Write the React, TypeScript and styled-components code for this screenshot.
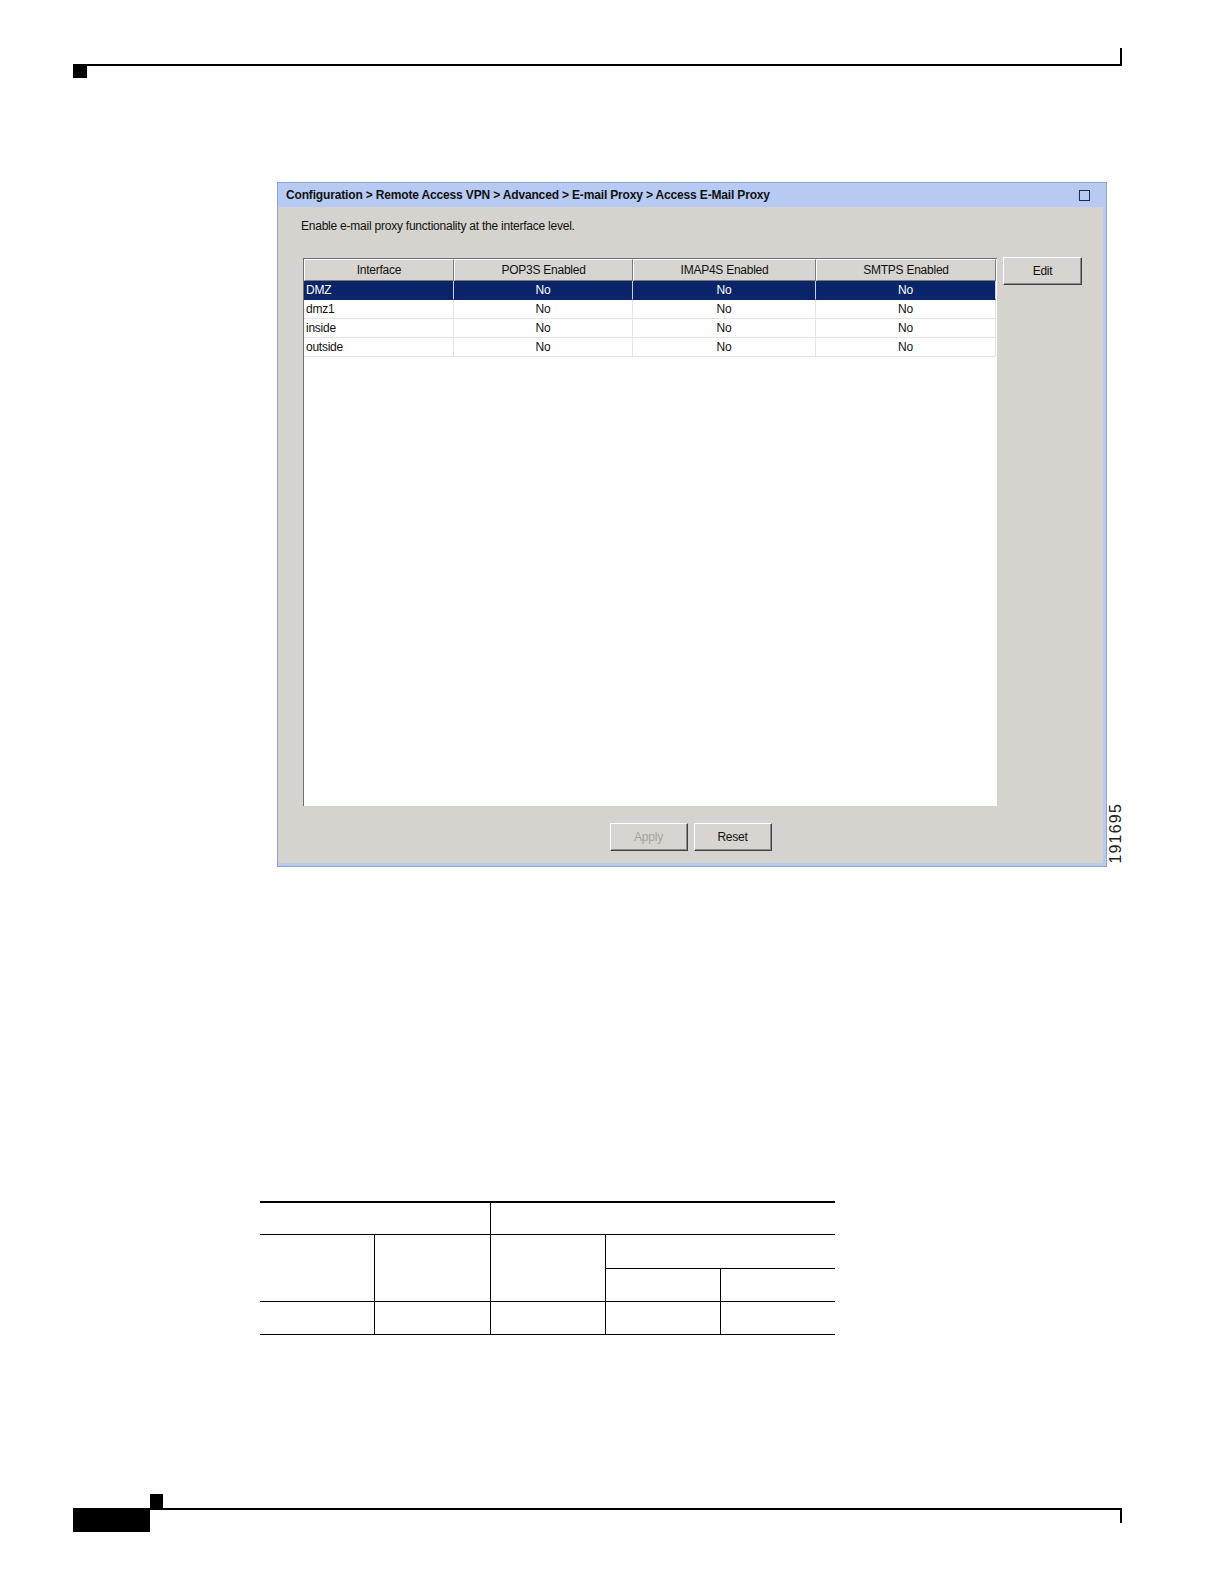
import React from "react";
import styled, { createGlobalStyle } from "styled-components";

const GlobalStyle = createGlobalStyle`
  html, body { margin: 0; padding: 0; background: #ffffff; }
  body { font-family: "Liberation Sans", Arial, sans-serif; }
  * { box-sizing: border-box; }
`;

const Page = styled.div`
  width: 1224px;
  height: 1584px;
  display: flex;
  flex-direction: column;
  overflow: hidden;
`;

const Header = styled.div`
  margin: 48px 0 0 73px;
  display: grid;
  grid-template-columns: 14px 1035px;
  grid-template-rows: 18px 12px;
`;

const HeaderRule = styled.div`
  grid-column: 1 / 3;
  grid-row: 1;
  border-bottom: 2px solid #000;
  border-right: 2px solid #000;
`;

const HeaderMarker = styled.div`
  grid-column: 1;
  grid-row: 2;
  background: #000;
`;

const FigureRow = styled.div`
  margin: 104px 0 0 277px;
  display: flex;
  align-items: flex-end;
`;

const Window = styled.div`
  width: 830px;
  height: 685px;
  border: 1px solid #8fa3cf;
  background: #d6d3ce;
  display: flex;
  flex-direction: column;
`;

const TitleBar = styled.div`
  height: 24px;
  flex: none;
  background: #b6caf4;
  display: flex;
  align-items: center;
  justify-content: space-between;
  padding: 0 16px 0 8px;
`;

const Title = styled.span`
  font-size: 12px;
  font-weight: bold;
  letter-spacing: -0.16px;
  color: #111;
`;

const MaxIcon = styled.span`
  width: 11px;
  height: 11px;
  border: 1.5px solid #1e2a50;
  margin-top: 1px;
`;

const Body = styled.div`
  flex: 1;
  display: flex;
  flex-direction: column;
  padding: 11px 0 0 23px;
  border-right: 3px solid #b9cbef;
  border-bottom: 3px solid #b9cbef;
`;

const Description = styled.div`
  font-size: 12px;
  line-height: 16px;
  letter-spacing: -0.23px;
  color: #111;
`;

const Content = styled.div`
  margin-top: 24px;
  display: flex;
  align-items: flex-start;
  padding-left: 2px;
`;

const TableBox = styled.div`
  width: 694px;
  height: 548px;
  background: #ffffff;
  border-left: 1px solid #6f6f6f;
  border-top: 1px solid #6f6f6f;
`;

const Grid = styled.table`
  width: 692px;
  table-layout: fixed;
  border-collapse: separate;
  border-spacing: 0;
  font-size: 12px;
  letter-spacing: -0.25px;
`;

const HeadCell = styled.th`
  height: 22px;
  padding: 0;
  font-weight: normal;
  color: #111;
  background: #d8d5d0;
  border-style: solid;
  border-width: 1px;
  border-color: #ffffff #7a7a7a #7a7a7a #ffffff;
  text-align: center;
  white-space: nowrap;
`;

const Cell = styled.td<{ $selected?: boolean; $first?: boolean }>`
  height: 19px;
  padding: 0 0 0 ${(p) => (p.$first ? "2px" : "0")};
  text-align: ${(p) => (p.$first ? "left" : "center")};
  color: ${(p) => (p.$selected ? "#ffffff" : "#111")};
  background: ${(p) => (p.$selected ? "#0a246a" : "#ffffff")};
  border-right: 1px solid ${(p) => (p.$selected ? "#c9cfe0" : "#e4e4e4")};
  border-bottom: 1px solid ${(p) => (p.$selected ? "#0a246a" : "#e4e4e4")};
  white-space: nowrap;
`;

const Button = styled.button<{ $disabled?: boolean }>`
  width: 78px;
  height: 28px;
  padding: 0;
  font-family: "Liberation Sans", Arial, sans-serif;
  font-size: 12px;
  letter-spacing: -0.25px;
  color: ${(p) => (p.$disabled ? "#a5a29d" : "#111")};
  background: #d8d5d0;
  border-style: solid;
  border-width: 1px;
  border-color: #ffffff #404040 #404040 #ffffff;
  box-shadow: inset -1px -1px 0 #8a8a8a;
  cursor: default;
`;

const SideButton = styled(Button)`
  width: 79px;
  margin: -1px 0 0 6px;
`;

const ButtonRow = styled.div`
  margin-top: 17px;
  margin-left: -23px;
  display: flex;
  justify-content: center;
  gap: 6px;
`;

const FigNum = styled.div`
  writing-mode: vertical-rl;
  transform: rotate(180deg);
  font-family: "Liberation Sans", Arial, sans-serif;
  font-size: 16px;
  letter-spacing: 1.2px;
  line-height: 16px;
  color: #222;
  margin: 0 0 3px 1px;
`;

const SpecTable = styled.table`
  margin: 334px 0 0 260px;
  width: 575px;
  border-collapse: collapse;
  table-layout: fixed;
`;

const SpecRow = styled.tr<{ $h: number; $thick?: boolean }>`
  height: ${(p) => p.$h}px;
  border-top: ${(p) => (p.$thick ? "2px" : "1px")} solid #000;
`;

const SpecCell = styled.td<{ $left?: boolean }>`
  padding: 0;
  border-bottom: 1px solid #000;
  border-left: ${(p) => (p.$left ? "1px solid #000" : "none")};
`;

const Footer = styled.div`
  margin: 159px 0 0 73px;
  display: grid;
  grid-template-columns: 77px 13px 959px;
  grid-template-rows: 14px 15px 9px;
`;

const FooterBlock = styled.div`
  grid-column: 1;
  grid-row: 2 / 4;
  background: #000;
`;

const FooterSquare = styled.div`
  grid-column: 2;
  grid-row: 1;
  background: #000;
`;

const FooterRule = styled.div`
  grid-column: 2 / 4;
  grid-row: 2;
  border-top: 2px solid #000;
  border-right: 2px solid #000;
`;

const rows = ["DMZ", "dmz1", "inside", "outside"];

export default function App() {
  return (
    <Page>
      <GlobalStyle />
      <Header>
        <HeaderRule />
        <HeaderMarker />
      </Header>

      <FigureRow>
        <Window>
          <TitleBar>
            <Title>
              Configuration &gt; Remote Access VPN &gt; Advanced &gt; E-mail Proxy &gt; Access E-Mail Proxy
            </Title>
            <MaxIcon />
          </TitleBar>
          <Body>
            <Description>Enable e-mail proxy functionality at the interface level.</Description>
            <Content>
              <TableBox>
                <Grid>
                  <colgroup>
                    <col style={{ width: 150 }} />
                    <col style={{ width: 179 }} />
                    <col style={{ width: 183 }} />
                    <col style={{ width: 180 }} />
                  </colgroup>
                  <thead>
                    <tr>
                      <HeadCell>Interface</HeadCell>
                      <HeadCell>POP3S Enabled</HeadCell>
                      <HeadCell>IMAP4S Enabled</HeadCell>
                      <HeadCell>SMTPS Enabled</HeadCell>
                    </tr>
                  </thead>
                  <tbody>
                    {rows.map((r, i) => (
                      <tr key={r}>
                        <Cell $first $selected={i === 0}>{r}</Cell>
                        <Cell $selected={i === 0}>No</Cell>
                        <Cell $selected={i === 0}>No</Cell>
                        <Cell $selected={i === 0}>No</Cell>
                      </tr>
                    ))}
                  </tbody>
                </Grid>
              </TableBox>
              <SideButton>Edit</SideButton>
            </Content>
            <ButtonRow>
              <Button $disabled>Apply</Button>
              <Button>Reset</Button>
            </ButtonRow>
          </Body>
        </Window>
        <FigNum>191695</FigNum>
      </FigureRow>

      <SpecTable>
        <colgroup>
          <col style={{ width: 114 }} />
          <col style={{ width: 116 }} />
          <col style={{ width: 115 }} />
          <col style={{ width: 115 }} />
          <col style={{ width: 115 }} />
        </colgroup>
        <tbody>
          <SpecRow $h={32} $thick>
            <SpecCell colSpan={2} />
            <SpecCell colSpan={3} $left />
          </SpecRow>
          <SpecRow $h={34}>
            <SpecCell rowSpan={2} />
            <SpecCell rowSpan={2} $left />
            <SpecCell rowSpan={2} $left />
            <SpecCell colSpan={2} $left />
          </SpecRow>
          <SpecRow $h={33}>
            <SpecCell $left />
            <SpecCell $left />
          </SpecRow>
          <SpecRow $h={33}>
            <SpecCell />
            <SpecCell $left />
            <SpecCell $left />
            <SpecCell $left />
            <SpecCell $left />
          </SpecRow>
        </tbody>
      </SpecTable>

      <Footer>
        <FooterBlock />
        <FooterSquare />
        <FooterRule />
      </Footer>
    </Page>
  );
}
